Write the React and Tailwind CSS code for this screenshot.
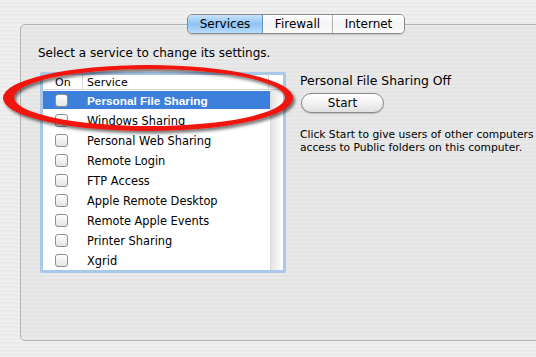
import React from 'react'

const services = [
  'Personal File Sharing',
  'Windows Sharing',
  'Personal Web Sharing',
  'Remote Login',
  'FTP Access',
  'Apple Remote Desktop',
  'Remote Apple Events',
  'Printer Sharing',
  'Xgrid',
]

function Checkbox() {
  return (
    <div className="w-[13px] h-[13px] rounded-[3px] border border-[#8e8e8e] bg-gradient-to-b from-white to-[#e4e4e4] shadow-[inset_0_1px_0_#fff]" />
  )
}

function Tabs() {
  return (
    <div className="flex -mt-[11px] ml-[166px] h-[20px] w-[218px] rounded-[5px] border border-[#8b8b8b] overflow-hidden text-[12px] leading-none shadow-[0_1px_1px_rgba(0,0,0,0.15)]">
      <div className="w-[75px] flex items-center justify-center bg-gradient-to-b from-[#c9e2fa] via-[#8ec3f3] to-[#b7dcfb] border-r border-[#6b8fbf] text-black">
        Services
      </div>
      <div className="w-[70px] flex items-center justify-center bg-gradient-to-b from-white via-[#f4f4f4] to-[#fafafa] border-r border-[#b0b0b0] text-black">
        Firewall
      </div>
      <div className="flex-1 flex items-center justify-center bg-gradient-to-b from-white via-[#f4f4f4] to-[#fafafa] text-black">
        Internet
      </div>
    </div>
  )
}

function ServiceList() {
  return (
    <div className="ml-[19px] mt-[12px] w-[246px] h-[201px] border-[3px] border-[#a9c8ea] bg-white flex flex-col rounded-[2px]">
      <div className="flex h-[15px] border-b border-[#d6d6d6] text-[11px] leading-none text-black">
        <div className="w-[40px] pl-[12px] flex items-center border-r border-[#d6d6d6]">On</div>
        <div className="w-[186px] pl-[4px] flex items-center border-r border-[#d6d6d6]">Service</div>
        <div className="flex-1" />
      </div>
      <div className="flex flex-1">
        <div className="w-[227px] flex flex-col">
          {services.map((name, i) => (
            <div key={name} className="h-[20px] py-px">
              <div className={`h-[18px] flex items-center ${i === 0 ? 'bg-[#3d80dc] text-white' : 'text-black'}`}>
                <div className="w-[44px] pl-[12px] flex items-center">
                  <Checkbox />
                </div>
                {i === 0 ? (
                  <span className="mt-[3px] text-[11.8px] leading-none font-bold" style={{ fontFamily: '"Liberation Sans", Arial, sans-serif' }}>{name}</span>
                ) : (
                  <span className="mt-[3px] text-[11.4px] leading-none">{name}</span>
                )}
              </div>
            </div>
          ))}
        </div>
        <div className="flex-1 border-l border-[#dcdcdc] bg-gradient-to-r from-[#e4e4e4] to-white" />
      </div>
    </div>
  )
}

function Ring() {
  return (
    <svg className="absolute left-0 top-0 pointer-events-none" width="300" height="140" viewBox="0 0 300 140">
      <defs>
        <filter id="sh" x="-10%" y="-30%" width="120%" height="160%">
          <feDropShadow dx="2" dy="2.5" stdDeviation="1.6" floodColor="#000" floodOpacity="0.55" />
        </filter>
      </defs>
      <path
        filter="url(#sh)"
        fillRule="evenodd"
        fill="#f0130e"
        d="M3 98 A145 33 0 1 0 293 98 A145 33 0 1 0 3 98 Z M14 97.5 A135.5 28.5 0 1 1 285 97.5 A135.5 28.5 0 1 1 14 97.5 Z"
      />
    </svg>
  )
}

export default function App() {
  return (
    <div
      className="relative w-[536px] h-[357px] overflow-hidden bg-[repeating-linear-gradient(180deg,#f0f0f0_0px,#f0f0f0_2px,#ebebeb_2px,#ebebeb_4px)] text-black"
      style={{ fontFamily: '"DejaVu Sans", "Liberation Sans", sans-serif' }}
    >
      <div className="pt-[24px] pl-[20px]">
        <div className="w-[540px] h-[317px] border border-[#b3b3b3] rounded-[5px] bg-[repeating-linear-gradient(180deg,#e9e9e9_0px,#e9e9e9_2px,#e4e4e4_2px,#e4e4e4_4px)]">
          <Tabs />
          <div className="ml-[17px] mt-[12px] text-[12px] leading-[14px]">Select a service to change its settings.</div>
          <div className="flex">
            <ServiceList />
            <div className="ml-[14px] mt-[14px] flex flex-col">
              <div className="text-[12.4px] leading-[14px]">Personal File Sharing Off</div>
              <button className="mt-[5px] ml-px w-[83px] h-[20px] rounded-full border border-[#8a8a8a] bg-gradient-to-b from-white via-[#f2f2f2] to-[#e0e0e0] text-[12px] leading-none shadow-[0_1px_1px_rgba(0,0,0,0.2)]">
                Start
              </button>
              <div className="mt-[15px] text-[10.7px] leading-[13px] w-[236px]">
                Click Start to give users of other computers access to Public folders on this computer.
              </div>
            </div>
          </div>
        </div>
      </div>
      <Ring />
    </div>
  )
}
